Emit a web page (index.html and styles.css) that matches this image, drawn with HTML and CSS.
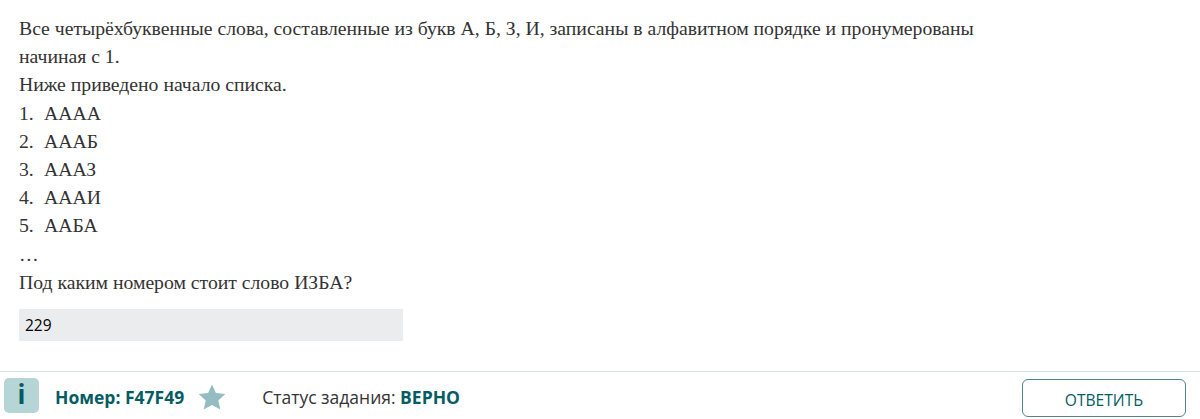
FILE: index.html
```html
<!doctype html>
<html lang="ru">
<head>
  <meta charset="utf-8">
  <title>Задание F47F49</title>
  <link rel="stylesheet" href="styles.css">
</head>
<body>
  <div class="task">
    <div class="task-text">
      <p>Все четырёхбуквенные слова, составленные из букв А, Б, З, И, записаны в алфавитном порядке и пронумерованы начиная с 1.</p>
      <p>Ниже приведено начало списка.</p>
      <p><span class="num">1.</span>АААА</p>
      <p><span class="num">2.</span>АААБ</p>
      <p><span class="num">3.</span>АААЗ</p>
      <p><span class="num">4.</span>АААИ</p>
      <p><span class="num">5.</span>ААБА</p>
      <p>…</p>
      <p>Под каким номером стоит слово ИЗБА?</p>
    </div>
    <div class="answer">229</div>
  </div>
  <div class="footer">
    <div class="info-badge">i</div>
    <div class="task-number">Номер: F47F49</div>
    <svg class="star" width="28" height="26" viewBox="0 0 28 26">
      <path fill="#95bcc1" d="M14 0.5l3.9 8.6 9.4 1-7 6.3 2 9.2L14 21l-8.300 4.600 2-9.200-7-6.300 9.400-1z"/>
    </svg>
    <div class="task-status">Статус задания: <b>ВЕРНО</b></div>
    <button class="reply">ОТВЕТИТЬ</button>
  </div>
</body>
</html>
```

FILE: styles.css
```css
html,body{
	background: #fff;
	margin:0; padding:0;
	height: 100%;
	overflow: hidden;
}
body{
	display: flex;
	flex-direction: column;
	justify-content: space-between;
	height: 419px;
}
.task{
	padding: 14px 19px 0;
}
.task-text{
	width: 965px;
	font-family: "Liberation Serif",serif;
	font-size: 19.7px;
	line-height: 28.2px;
	color: #333;
}
.task-text p{ margin:0; }
.num{
	display: inline-block;
	width: 25px;
}
.answer{
	margin-top: 13px;
	width: 378px;
	height: 32px;
	padding-left: 6px;
	background-color: #ebecee;
	font-family: "Open Sans",sans-serif;
	font-size: 15.5px;
	line-height: 33px;
	color: #000;
}
.footer{
	display: flex;
	align-items: center;
	height: 47px;
	border-top: 1px solid #d5e4e4;
	padding-left: 4px;
	font-family: "Open Sans",sans-serif;
	font-size: 17.5px;
	color: #333;
}
.info-badge{
	width: 35px;
	height: 35px;
	border-radius: 5px;
	background-color: #b5d5d6;
	color: #045c63;
	font-size: 26px;
	font-weight: 700;
	line-height: 33px;
	text-align: center;
}
.task-number{
	margin-left: 16px;
	margin-top: 2px;
	font-weight: 700;
	color: #045c63;
}
.star{
	margin-left: 14px;
	margin-top: 3px;
}
.task-status{
	margin-left: 36px;
	margin-top: 2px;
}
.task-status b{ color:#045c63; }
.reply{
	margin-left: auto;
	margin-right: 14px;
	margin-top: 5px;
	width: 164px;
	height: 38px;
	border: 1px solid #4f868b;
	border-radius: 6px;
	background: #fff;
	color: #045c63;
	font-family: "Open Sans",sans-serif;
	font-size: 15.6px;
	padding: 3px 0 0;
}
```
